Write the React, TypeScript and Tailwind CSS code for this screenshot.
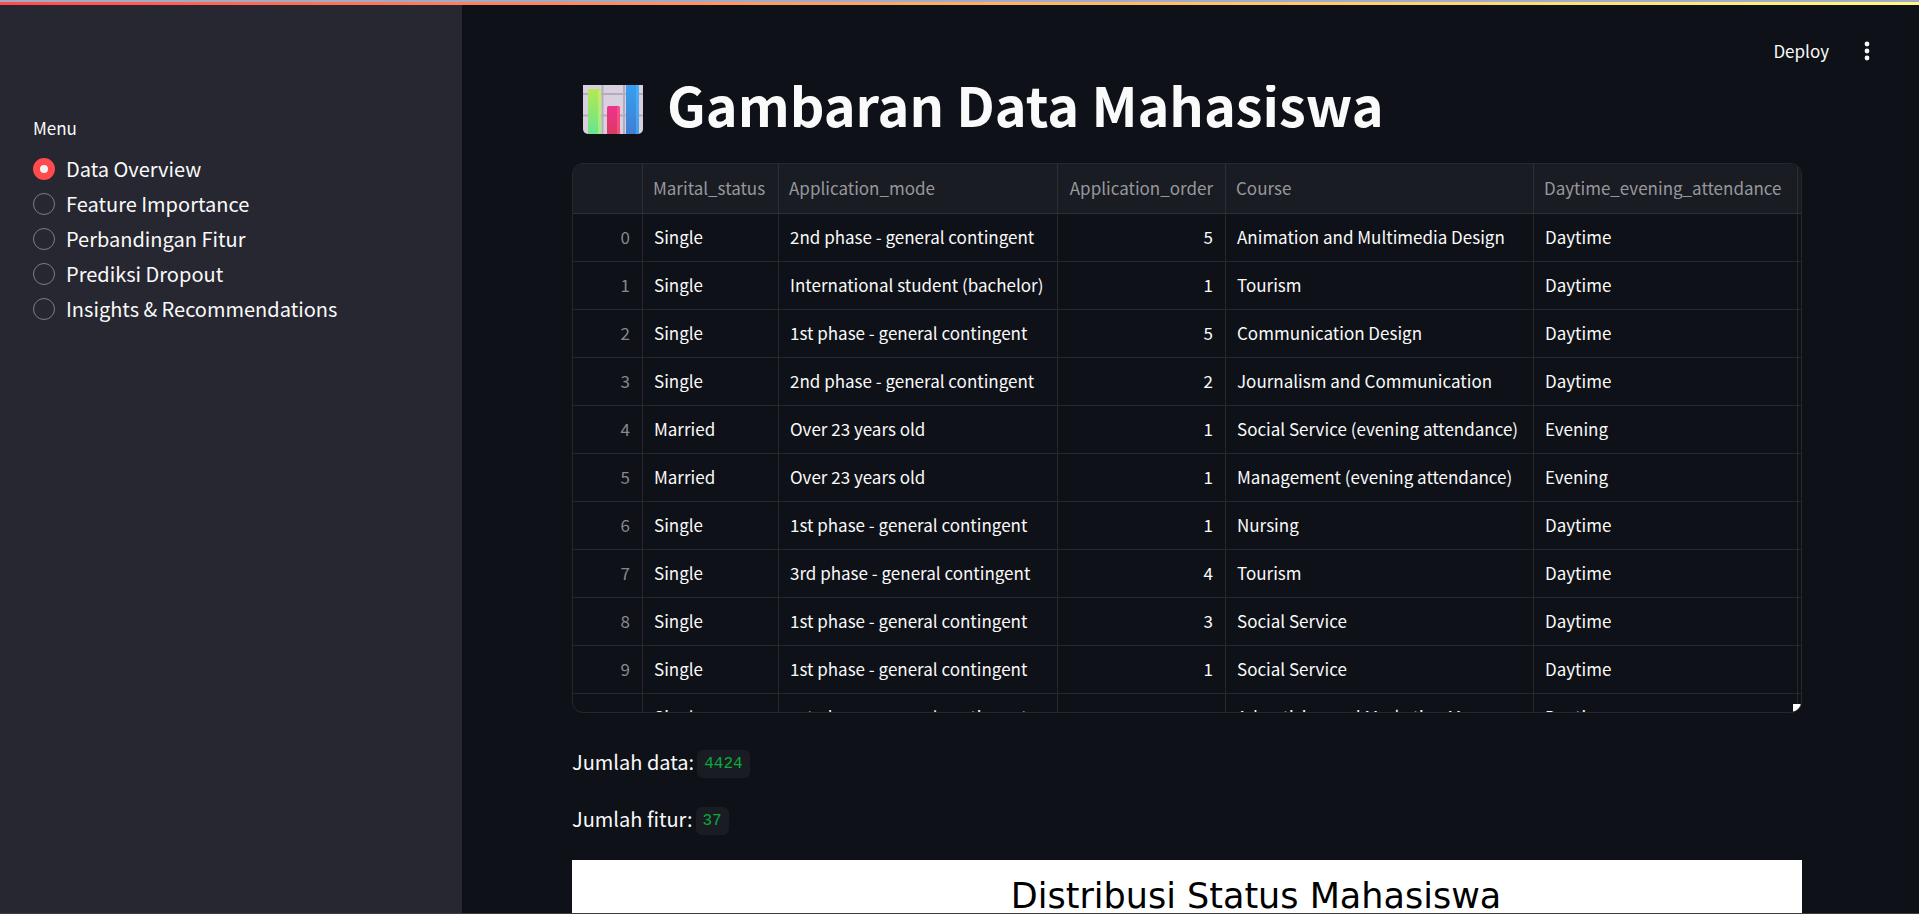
import React, { useState } from "react";

const menuItems = [
  "Data Overview",
  "Feature Importance",
  "Perbandingan Fitur",
  "Prediksi Dropout",
  "Insights & Recommendations",
];

const columns = [
  { name: "Marital_status", numeric: false },
  { name: "Application_mode", numeric: false },
  { name: "Application_order", numeric: true },
  { name: "Course", numeric: false },
  { name: "Daytime_evening_attendance", numeric: false },
];

const rows: string[][] = [
  ["Single", "2nd phase - general contingent", "5", "Animation and Multimedia Design", "Daytime"],
  ["Single", "International student (bachelor)", "1", "Tourism", "Daytime"],
  ["Single", "1st phase - general contingent", "5", "Communication Design", "Daytime"],
  ["Single", "2nd phase - general contingent", "2", "Journalism and Communication", "Daytime"],
  ["Married", "Over 23 years old", "1", "Social Service (evening attendance)", "Evening"],
  ["Married", "Over 23 years old", "1", "Management (evening attendance)", "Evening"],
  ["Single", "1st phase - general contingent", "1", "Nursing", "Daytime"],
  ["Single", "3rd phase - general contingent", "4", "Tourism", "Daytime"],
  ["Single", "1st phase - general contingent", "3", "Social Service", "Daytime"],
  ["Single", "1st phase - general contingent", "1", "Social Service", "Daytime"],
  ["Single", "1st phase - general contingent", "1", "Advertising and Marketing Management", "Daytime"],
];

function ChartIcon() {
  return (
    <svg viewBox="0 0 60 60" className="size-[60px] shrink-0" aria-hidden="true">
      <defs>
        <linearGradient id="green" x1="0" y1="0" x2="0" y2="1">
          <stop offset="0" stopColor="#b5e853" />
          <stop offset="1" stopColor="#67e58f" />
        </linearGradient>
        <linearGradient id="pink" x1="0" y1="0" x2="0" y2="1">
          <stop offset="0" stopColor="#f0318c" />
          <stop offset="1" stopColor="#dc3a63" />
        </linearGradient>
        <linearGradient id="blue" x1="0" y1="0" x2="0" y2="1">
          <stop offset="0" stopColor="#35a4f5" />
          <stop offset="1" stopColor="#3f7fd2" />
        </linearGradient>
      </defs>
      <rect width="60" height="60" rx="5" fill="#d9d0df" />
      <path d="M19.500 0V60M41 0V60M0 20H60M0 41.500H60" stroke="#b5abbd" strokeWidth="2" />
      <path d="M5 60V17a2 2 0 0 1 2-2h9a2 2 0 0 1 2 2V60z" fill="url(#green)" />
      <path d="M15 16h1a2 2 0 0 1 2 2V60h-3z" fill="#d2f76a" opacity=".5" />
      <path d="M24 60V34a2 2 0 0 1 2-2h9a2 2 0 0 1 2 2V60z" fill="url(#pink)" />
      <path d="M34 33h1a2 2 0 0 1 2 2V60h-3z" fill="#ff6a8a" opacity=".5" />
      <path d="M43 60V7a2 2 0 0 1 2-2h9a2 2 0 0 1 2 2V60z" fill="url(#blue)" />
      <path d="M53 6h1a2 2 0 0 1 2 2V60h-3z" fill="#5cbcff" opacity=".5" />
    </svg>
  );
}

function Sidebar() {
  const [selected, setSelected] = useState(menuItems[0]);
  return (
    <aside className="w-[462px] shrink-0 bg-[#262730] px-[33px] pt-[111px]">
      <fieldset>
        <legend className="mb-[14px] text-[17px] leading-6">Menu</legend>
        <div className="flex flex-col gap-[5px]">
          {menuItems.map((item) => (
            <label key={item} className="flex items-center gap-[11px] text-[20px] leading-[30px]">
              <input
                type="radio"
                name="menu"
                checked={selected === item}
                onChange={() => setSelected(item)}
                className="size-[22px] appearance-none rounded-full border border-[#7c7d84] checked:border-[7px] checked:border-[#ff4b4b] checked:bg-[#f0f2f6]"
              />
              {item}
            </label>
          ))}
        </div>
      </fieldset>
    </aside>
  );
}

function DataTable() {
  return (
    <div className="relative h-[550px] overflow-hidden rounded-[11px] border border-[#26282d]">
      <table className="w-full table-fixed border-separate border-spacing-0 text-[17px] leading-6 whitespace-nowrap">
        <colgroup>
          <col className="w-[70px]" />
          <col className="w-[136px]" />
          <col className="w-[279px]" />
          <col className="w-[168px]" />
          <col className="w-[308px]" />
          <col className="w-[264px]" />
          <col />
        </colgroup>
        <thead className="bg-[#1a1c23] text-[#97989c]">
          <tr>
            <th className="h-[50px] border-r border-b border-[#2d2f36]" aria-label="Index" />
            {columns.map((c) => (
              <th
                key={c.name}
                className={
                  "border-r border-b border-[#2d2f36] pb-[2px] font-normal " +
                  (c.numeric ? "pr-3 text-right" : "pl-[10px] text-left")
                }
              >
                {c.name}
              </th>
            ))}
            <th className="border-b border-[#2d2f36]" aria-hidden="true" />
          </tr>
        </thead>
        <tbody>
          {rows.map((row, i) => (
            <tr key={i}>
              <th className="h-12 border-r border-b border-[#26282d] px-3 pb-px text-right font-normal text-[#87888c]">
                {i}
              </th>
              {row.map((value, j) => (
                <td
                  key={j}
                  className={
                    "overflow-hidden border-r border-b border-[#26282d] pb-px " +
                    (columns[j].numeric ? "pr-3 text-right" : "pl-[11px] text-left")
                  }
                >
                  {value}
                </td>
              ))}
              <td className="border-b border-[#26282d]" />
            </tr>
          ))}
        </tbody>
      </table>
      <div className="absolute right-0 bottom-0 size-2 bg-white" />
    </div>
  );
}

function Stat({ label, value }: { label: string; value: string }) {
  return (
    <p className="flex items-center gap-[3px] text-[20px] leading-[35px]">
      {label}
      <code className="mt-[5px] rounded-md bg-[#1a1c23] px-[7px] pt-px font-['Liberation_Mono',monospace] text-[16px] leading-[27px] text-[#09ab3b]">
        {value}
      </code>
    </p>
  );
}

export default function App() {
  return (
    <div className="flex h-screen flex-col overflow-hidden border-b border-[#3c3c40] bg-[#0e1117] font-['Noto_Sans_CJK_SC','Noto_Sans',sans-serif] text-[#fafafa]">
      <div className="h-[2px] shrink-0 bg-[#a3aac6]" />
      <div className="h-[3px] shrink-0 bg-linear-to-r from-[#ff4b4b] to-[#fffd80]" />
      <div className="flex min-h-0 flex-1">
        <Sidebar />
        <div className="flex min-w-0 flex-1 flex-col">
          <header className="flex h-20 shrink-0 items-center justify-end gap-[26px] pt-3 pr-10">
            <button type="button" className="text-[17px] leading-6">Deploy</button>
            <button type="button" aria-label="Main menu" className="flex size-6 items-center justify-center">
              <svg viewBox="0 0 6 20" className="h-5 w-[6px]" fill="currentColor" aria-hidden="true">
                <circle cx="3" cy="3" r="2.400" />
                <circle cx="3" cy="10" r="2.400" />
                <circle cx="3" cy="17" r="2.400" />
              </svg>
            </button>
          </header>
          <main className="min-h-0 flex-1 overflow-hidden pr-[117px] pl-[110px]">
            <h1 className="mb-[29px] flex h-[49px] items-end gap-6 overflow-hidden pl-[11px] text-[54px] leading-[60px] font-bold">
              <ChartIcon />
              Gambaran Data Mahasiswa
            </h1>
            <DataTable />
            <div className="mt-[31px] flex flex-col gap-[22px]">
              <Stat label="Jumlah data:" value="4424" />
              <Stat label="Jumlah fitur:" value="37" />
            </div>
            <figure className="mt-6 bg-white pt-[13px] pb-80 pl-[138px] text-center font-['DejaVu_Sans',sans-serif] text-[35px] leading-[46px] text-black">
              <figcaption>Distribusi Status Mahasiswa</figcaption>
            </figure>
          </main>
        </div>
      </div>
    </div>
  );
}
